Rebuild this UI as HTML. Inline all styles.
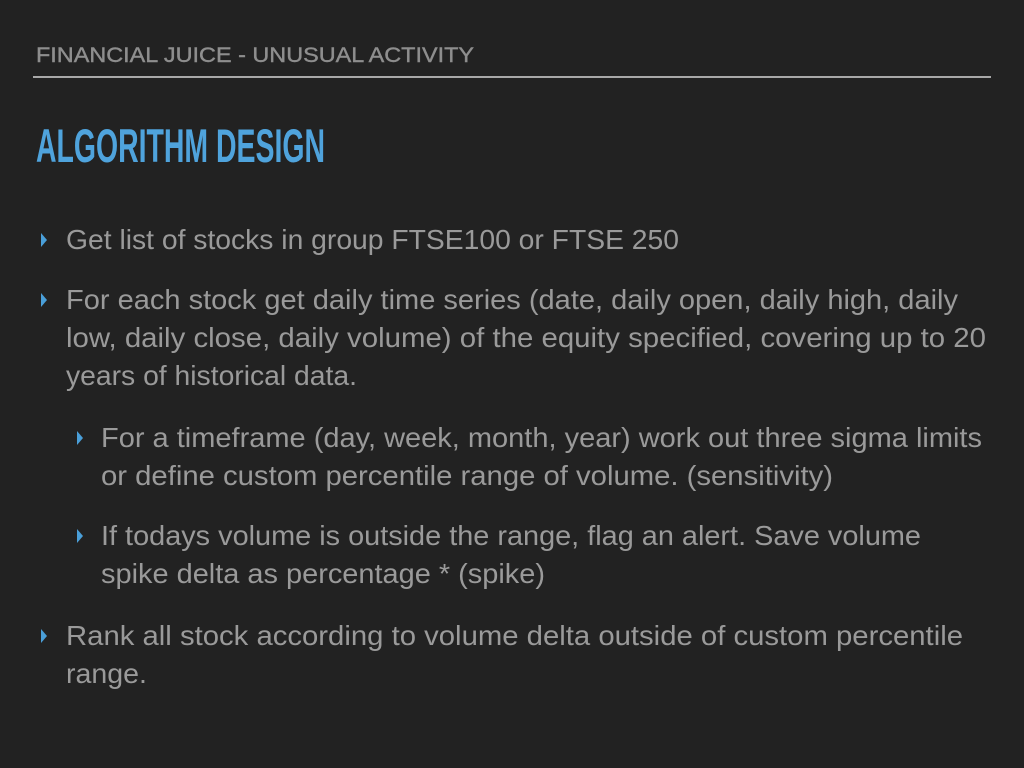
<!DOCTYPE html>
<html><head><meta charset="utf-8"><style>
html,body{margin:0;padding:0;background:#222222;}
svg{display:block}
</style></head><body>
<svg width="1024" height="768" viewBox="0 0 1024 768" xmlns="http://www.w3.org/2000/svg">
<rect width="1024" height="768" fill="#222222"/>
<text x="36" y="62" font-family="Liberation Sans, sans-serif" font-size="21" fill="#8e8e8e" stroke="#8e8e8e" stroke-width="0.4" textLength="438" lengthAdjust="spacingAndGlyphs">FINANCIAL JUICE - UNUSUAL ACTIVITY</text>
<rect x="33" y="76" width="958" height="2" fill="#a8a8a8"/>
<text x="36" y="162" font-family="Liberation Sans, sans-serif" font-weight="bold" font-size="47" fill="#4fa3dc" textLength="289" lengthAdjust="spacingAndGlyphs">ALGORITHM DESIGN</text>
<g fill="#4a9fd9">
<polygon points="41,233 47,240 41,247"/>
<polygon points="41,293 47,300 41,307"/>
<polygon points="77,431 83,438 77,445"/>
<polygon points="77,529 83,536 77,543"/>
<polygon points="41,629 47,636 41,643"/>
</g>
<g font-family="Liberation Sans, sans-serif" font-size="27.5" fill="#9a9a9a">
<text x="66" y="249" textLength="613" lengthAdjust="spacingAndGlyphs">Get list of stocks in group FTSE100 or FTSE 250</text>
<text x="66" y="309" textLength="892" lengthAdjust="spacingAndGlyphs">For each stock get daily time series (date, daily open, daily high, daily</text>
<text x="66" y="347" textLength="920" lengthAdjust="spacingAndGlyphs">low, daily close, daily volume) of the equity specified, covering up to 20</text>
<text x="66" y="385" textLength="291" lengthAdjust="spacingAndGlyphs">years of historical data.</text>
<text x="101" y="447" textLength="881" lengthAdjust="spacingAndGlyphs">For a timeframe (day, week, month, year) work out three sigma limits</text>
<text x="101" y="485" textLength="732" lengthAdjust="spacingAndGlyphs">or define custom percentile range of volume. (sensitivity)</text>
<text x="101" y="545" textLength="820" lengthAdjust="spacingAndGlyphs">If todays volume is outside the range, flag an alert. Save volume</text>
<text x="101" y="583" textLength="444" lengthAdjust="spacingAndGlyphs">spike delta as percentage * (spike)</text>
<text x="66" y="645" textLength="897" lengthAdjust="spacingAndGlyphs">Rank all stock according to volume delta outside of custom percentile</text>
<text x="66" y="683" textLength="81" lengthAdjust="spacingAndGlyphs">range.</text>
</g>
</svg>
</body></html>
